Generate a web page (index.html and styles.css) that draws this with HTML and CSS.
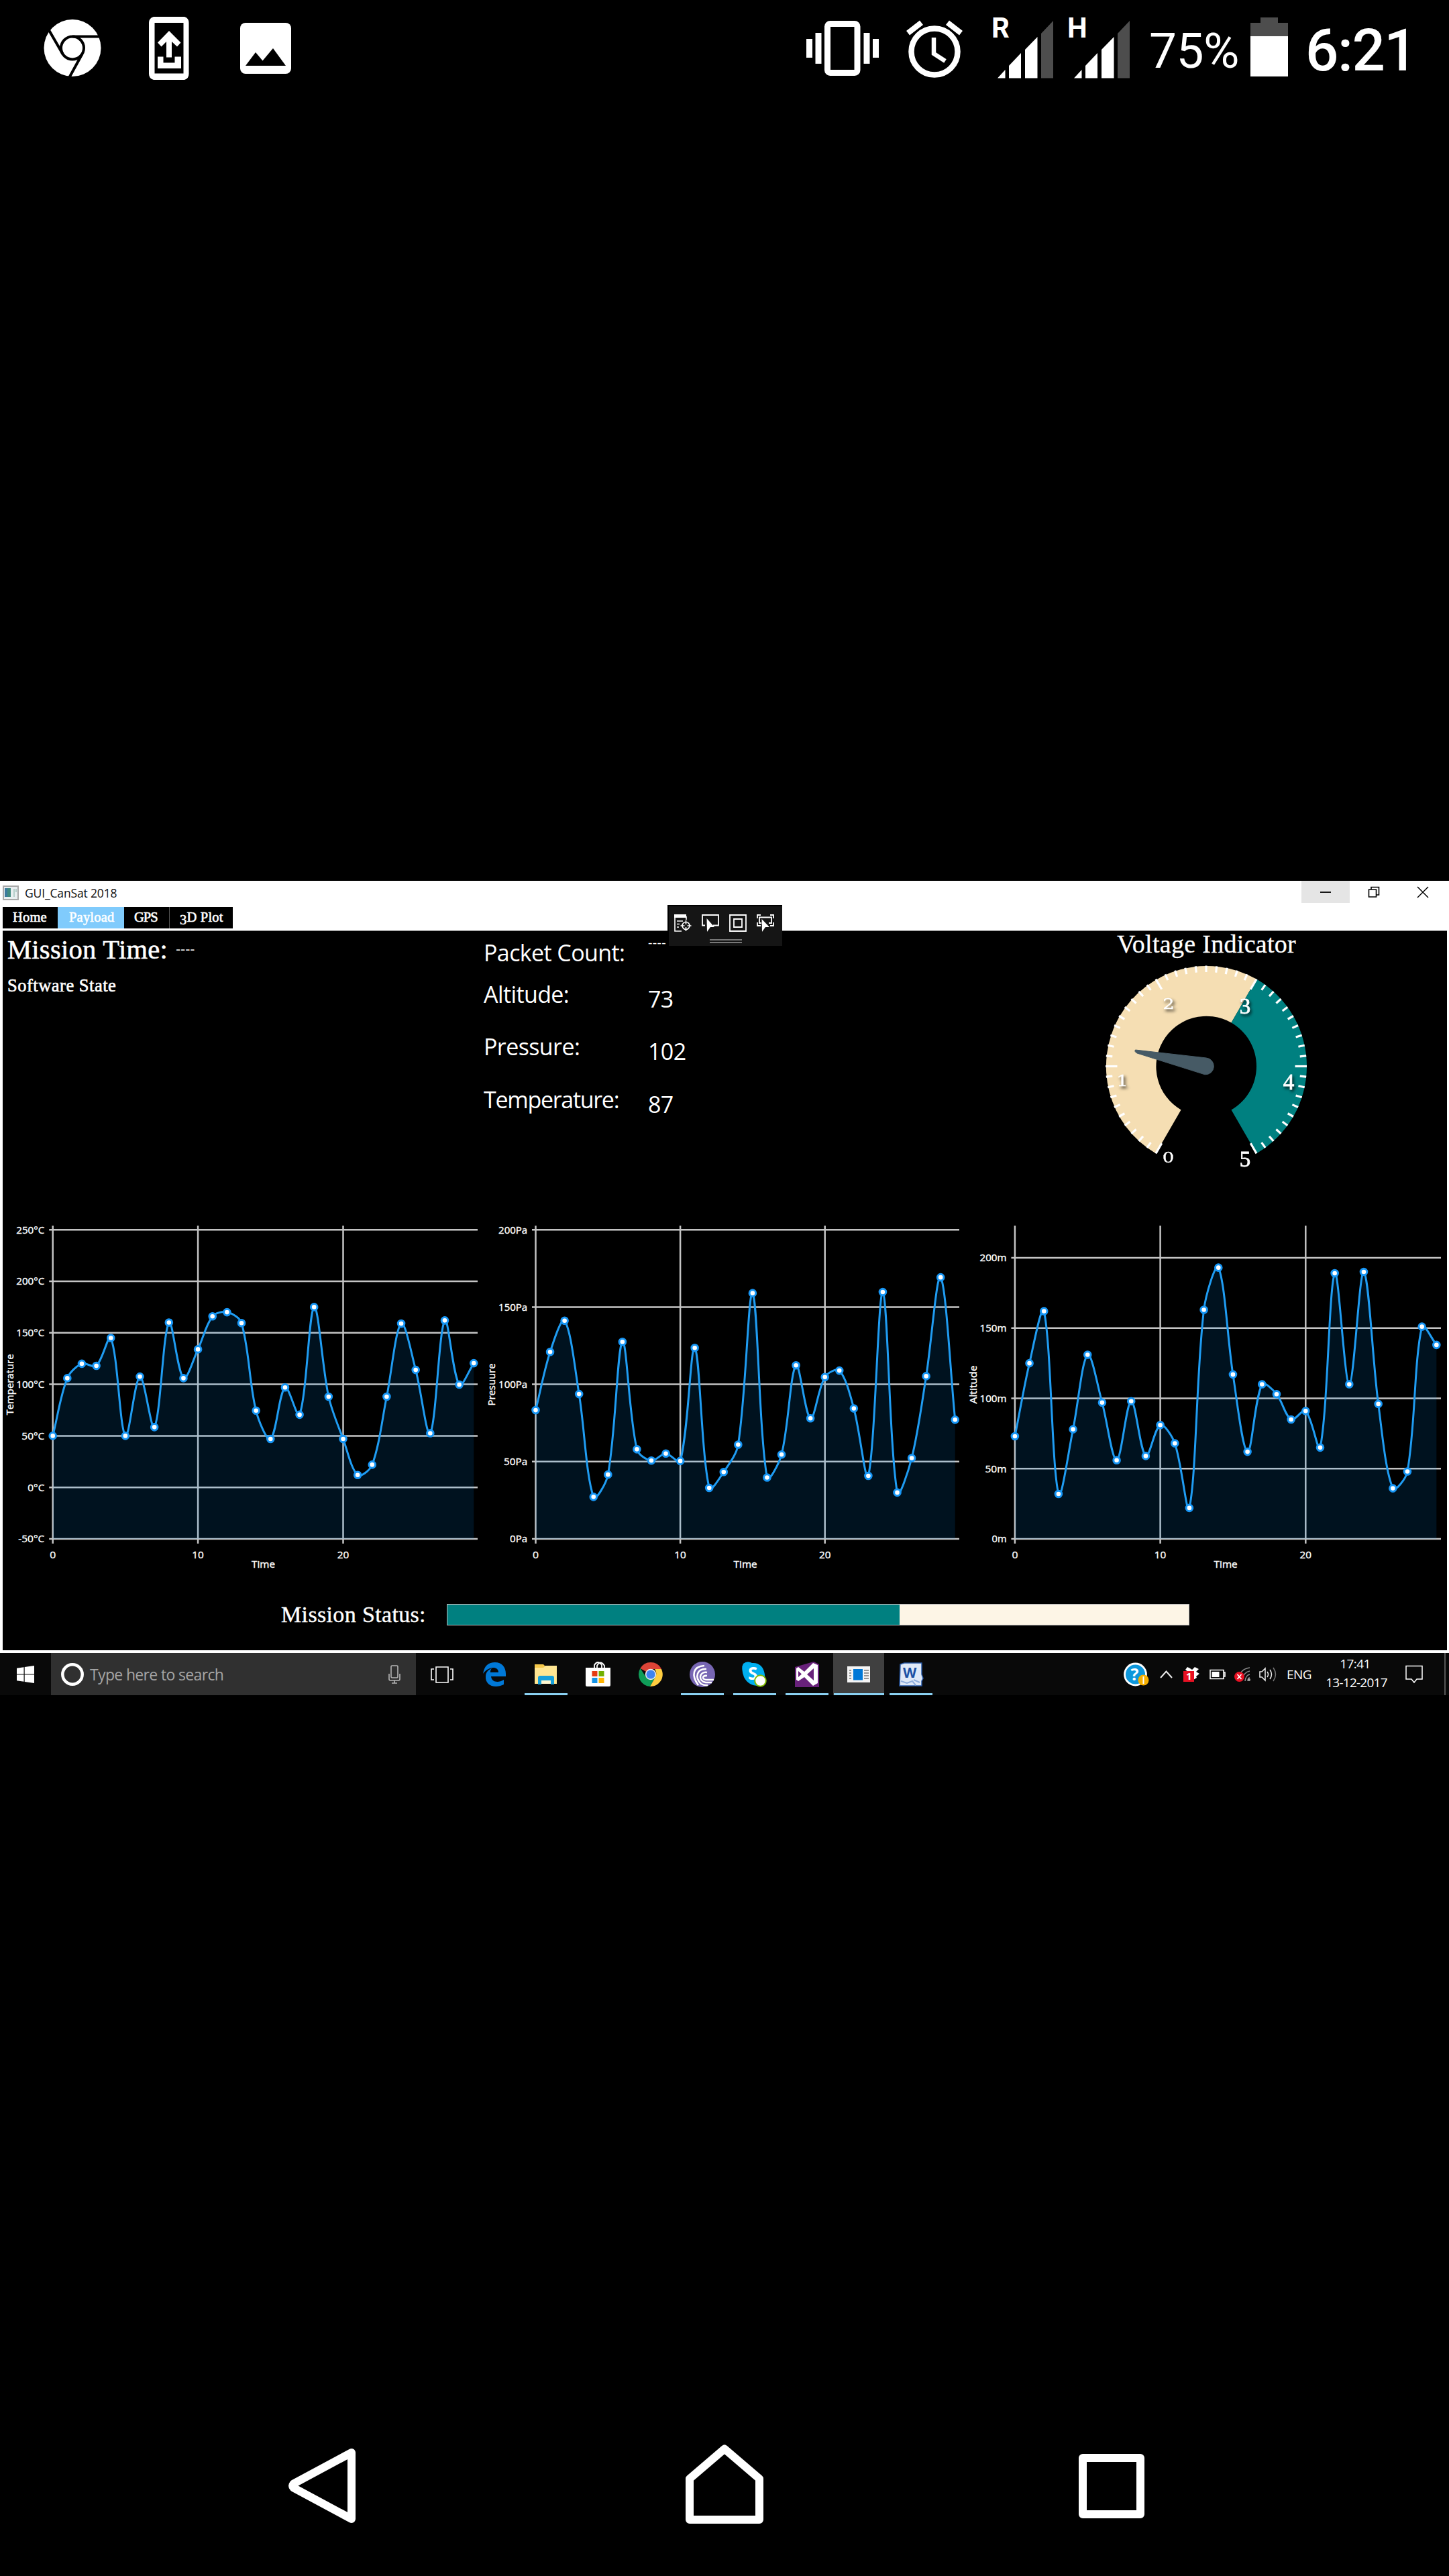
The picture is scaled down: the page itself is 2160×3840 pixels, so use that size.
FILE: index.html
```html
<!DOCTYPE html>
<html lang="en">
<head>
<meta charset="utf-8">
<title>GUI_CanSat 2018</title>
<link rel="stylesheet" href="styles.css">
</head>
<body>
<header class="phone-status">
  <div class="notif">
    <svg width="86" height="100" viewBox="65 20 86 100">
      <circle cx="108" cy="71.5" r="42.5" fill="#fff"/>
      <circle cx="108" cy="71.5" r="17" fill="none" stroke="#000" stroke-width="4"/>
      <path d="M108 54.500H148M93.500 80.500L73 45M122.500 80.500L103 116" fill="none" stroke="#000" stroke-width="4"/>
    </svg>
    <svg width="60" height="100" viewBox="222 20 60 100">
      <path fill="#fff" fill-rule="evenodd" d="M229 25H275Q281.500 27 281.500 34V110Q281.500 117 275 119H229Q222 117 222 110V34Q222 27 229 25ZM230.500 34V109.500H273.500V34Z"/>
      <path fill="#fff" d="M252 46L269.500 63.500L264 69.500L256 62V85.500H248V62L240.500 69.500L235 63.500ZM235 84.500H243.500V93.500H260.500V84.500H270V102H235Z"/>
    </svg>
    <svg width="76" height="100" viewBox="358 20 76 100">
      <rect x="358" y="34" width="76" height="76" rx="8" fill="#fff"/>
      <path d="M366 98L381 78L391.500 90.500L407 72L426 98Z"/>
    </svg>
  </div>
  <div class="sys">
    <svg width="110" height="100" viewBox="1201 20 110 100">
      <rect x="1233.500" y="35.500" width="44.500" height="73" rx="4" fill="none" stroke="#fff" stroke-width="9"/>
      <path fill="#fff" d="M1202 58h9v28h-9zM1215.500 49h9v46h-9zM1287.500 49h9v46h-9zM1301 58h9v28h-9z"/>
    </svg>
    <svg class="alarm" width="86" height="100" viewBox="1350 20 86 100">
      <circle cx="1393" cy="77" r="34.500" fill="none" stroke="#fff" stroke-width="8.500"/>
      <path d="M1392 56V80L1409 91" fill="none" stroke="#fff" stroke-width="6.500"/>
      <path fill="#fff" d="M1371 30.500L1376 37L1356 52.500L1351 46ZM1415 30.500L1410 37L1430 52.500L1435 46Z"/>
    </svg>
    <svg class="signal" width="94" height="100" viewBox="1478 20 94 100">
      <text x="1478" y="56" class="net">R</text>
      <path fill="#fff" d="M1487 116.500L1498.500 104V116.500ZM1504 116.500V98L1522 79V116.500ZM1528 116.500V74L1546.500 55V116.500Z"/>
      <path fill="#4d4d4d" d="M1552 116.500V50L1570 31V116.500Z"/>
    </svg>
    <svg class="signal second" width="94" height="100" viewBox="1592 20 94 100">
      <text x="1591" y="56" class="net">H</text>
      <path fill="#fff" d="M1601 116.500L1612.500 104V116.500ZM1618 116.500V98L1636 79V116.500ZM1642 116.500V74L1660.500 55V116.500Z"/>
      <path fill="#4d4d4d" d="M1666 116.500V50L1684 31V116.500Z"/>
    </svg>
    <span class="pct">75%</span>
    <svg class="batt" width="56" height="100" viewBox="1864 20 56 100">
      <path fill="#4d4d4d" d="M1879 26h26v8h15v20h-56V34h15z"/>
      <path fill="#fff" d="M1864 54h56v60h-56z"/>
    </svg>
    <span class="clock">6:21</span>
  </div>
</header>

<main class="desktop">
  <section class="window">
    <div class="titlebar">
      <svg class="app-icon" width="24" height="22" viewBox="0 0 24 22">
        <rect x="1" y="1" width="22" height="20" fill="#e9eef0" stroke="#a9a9a9" stroke-width="2"/>
        <rect x="3" y="4" width="9" height="13" fill="#3f8a80"/><rect x="3" y="4" width="4" height="13" fill="#3c7a9e"/>
        <path d="M17 5v12M20 5v5" stroke="#b5cfcb" stroke-width="2"/>
      </svg>
      <span class="app-title">GUI_CanSat 2018</span>
      <div class="win-buttons">
        <span class="min"><svg width="18" height="18" viewBox="0 0 18 18"><path d="M1 9h16" stroke="#000" stroke-width="1.800"/></svg></span>
        <span><svg width="18" height="18" viewBox="0 0 18 18"><path d="M1.500 5h11v11h-11zM5 5V1.500h11.500V13h-4" fill="none" stroke="#000" stroke-width="1.600"/></svg></span>
        <span><svg width="18" height="18" viewBox="0 0 18 18"><path d="M1 1l16 16M17 1L1 17" stroke="#000" stroke-width="1.500"/></svg></span>
      </div>
    </div>
    <nav class="tabs">
      <span class="t-home">Home</span><span class="t-payload">Payload</span><span class="t-gps">GPS</span><span class="t-plot"><i>3</i>D Plot</span>
    </nav>
    <div class="content">
      <div class="top">
        <div class="mission">
          <div class="mission-time"><span>Mission Time:</span><span class="dashes">----</span></div>
          <div class="software">Software State</div>
        </div>
        <div class="telemetry">
          <span>Packet Count:</span><b class="dashes">----</b>
          <span>Altitude:</span><b>73</b>
          <span>Pressure:</span><b>102</b>
          <span class="temp">Temperature:</span><b>87</b>
        </div>
        <div class="voltage">
          <h2>Voltage Indicator</h2>
          <svg id="gauge" width="400" height="340" viewBox="-200 -159.500 400 340"></svg>
        </div>
      </div>
      <div class="charts">
        <svg id="temperature" width="716" height="554" viewBox="4 1800 716 554"></svg>
        <svg id="pressure" width="720" height="554" viewBox="720 1800 720 554"></svg>
        <svg id="altitude" width="717" height="554" viewBox="1440 1800 717 554"></svg>
      </div>
      <div class="status">
        <span>Mission Status:</span>
        <div class="progress"><div class="done"></div></div>
      </div>
    </div>
    <div class="debug-bar">
      <div class="debug-icons">
        <svg width="26" height="26" viewBox="0 0 26 26" fill="none" stroke="#fff" stroke-width="1.600">
          <path d="M1 1V25H11M1 3H18" /><path d="M0 2.500H18" stroke-width="5"/><path d="M18 3v5M4 10h9M4 14.500h4M4 19h3"/><circle cx="17.500" cy="17" r="5.500"/><path d="M17.500 9v6M17.500 19v6M9.500 17h6M19.500 17h6"/>
        </svg>
        <svg width="26" height="26" viewBox="0 0 26 26" fill="none" stroke="#fff" stroke-width="1.800">
          <path d="M5 16.500H1V1H25V16.500H17"/><path d="M7.500 6L19 19H13L8 26Z" fill="#fff" stroke="none"/>
        </svg>
        <svg width="26" height="26" viewBox="0 0 26 26" fill="none" stroke="#fff" stroke-width="1.800">
          <path d="M1 1H25V25H1ZM7 7H19V19H7Z"/>
        </svg>
        <svg width="26" height="26" viewBox="0 0 26 26" fill="none" stroke="#fff" stroke-width="1.800">
          <path d="M1 6V1H6M20 1H25V6M25 12V17H20M1 12V17H6M7 13H4V4.500H22V13H18"/><path d="M7.500 7L19 19H13L8 26Z" fill="#fff" stroke="none"/>
        </svg>
      </div>
      <div class="grip"></div>
    </div>
  </section>

  <footer class="taskbar">
    <div class="start"><svg width="26" height="26" viewBox="0 0 26 26" fill="#fff"><path d="M0 3.700L10.500 2.200V12.400H0ZM11.700 2L26 0V12.400H11.700ZM0 13.600H10.500V23.800L0 22.300ZM11.700 13.600H26V26L11.700 24Z"/></svg></div>
    <div class="search">
      <svg width="36" height="36" viewBox="0 0 36 36"><circle cx="18" cy="18" r="14.700" fill="none" stroke="#fff" stroke-width="4.500"/></svg>
      <span>Type here to search</span>
      <svg width="18" height="28" viewBox="0 0 18 28" fill="none" stroke="#b5b5b5" stroke-width="1.600"><rect x="4" y="1" width="10" height="18" rx="1.500"/><path d="M1 13v8q0 2 2 2h12q2 0 2-2v-8M9 23v4M5 27h8"/></svg>
    </div>
    <div class="tasks">
      <span><svg width="34" height="26" viewBox="0 0 34 26" fill="none" stroke="#fff" stroke-width="1.600"><path d="M8 2H26V25H8ZM5 5H1V21H5M29 5H33V21H29"/></svg></span>
      <span><svg width="34" height="36" viewBox="0 0 34 36"><path fill="#0078d7" d="M0 17C2 5 8 0 18 0C28 0 34 7 34 17V21H12C13 30 23 31 31 26V33C17 40 3 34 4 21C4 15 8 11 13 9C11 11 11 13 11 15H23C23 6 9 5 0 17Z"/></svg></span>
      <span class="open"><svg width="34" height="30" viewBox="0 0 34 30"><path fill="#f5c84a" d="M0 0h13l3 3h17v26H0z"/><path fill="#ffe692" d="M0 5h13l3-3h17v27H0z"/><path fill="#15a0db" d="M5 30V20q0-3 3-3h18q3 0 3 3v10h-5v-6H10v6z"/><path fill="#fff7cf" d="M10 24h14v5H10z"/></svg></span>
      <span><svg width="37" height="38" viewBox="0 0 37 38"><path d="M13 11V5Q18 -3 24 5V11M17 11V6Q22 -3 28 6V11" fill="none" stroke="#fff" stroke-width="1.800"/><path fill="#fff" d="M0 9H37V35Q37 37 35 37H2Q0 37 0 35Z"/><path fill="#e63b13" d="M9.500 14h8v8h-8z"/><path fill="#71b000" d="M19.500 14h8v8h-8z"/><path fill="#1593e6" d="M9.500 24h8v8h-8z"/><path fill="#ffb400" d="M19.500 24h8v8h-8z"/></svg></span>
      <span><svg width="36" height="36" viewBox="0 0 36 36"><path fill="#dc4437" d="M18 18L2.400 9A18 18 0 0 1 33.600 9L33.600 10H18Z"/><path fill="#0f9d58" d="M2.400 9A18 18 0 0 0 17 36L25 22L18 18L11 22Z"/><path fill="#ffcd40" d="M33.900 10A18 18 0 0 1 17 36L25 22Q28 16 24 10Z"/><circle cx="18" cy="18" r="8.200" fill="#f1f1f1"/><circle cx="18" cy="18" r="6.600" fill="#3f83f1"/></svg></span>
      <span class="open"><svg width="38" height="38" viewBox="0 0 38 38"><circle cx="19" cy="19" r="19" fill="#7766b3"/><path d="M22 6C5 7 2 20 13 35M25 11C11 10 7 23 17 33Q22 36 27 35M26 16C14 14 12 29 24 31H33M26 21C18 20 18 27 26 27H36" fill="none" stroke="#fff" stroke-width="2.600"/></svg></span>
      <span class="open"><svg width="37" height="38" viewBox="0 0 37 38"><path fill="#00aff0" d="M2 3Q8 -2 15 2Q31 1 34 19Q36 31 27 36Q10 37 3 23Q-2 9 2 3Z"/><text x="9" y="27" class="skype">S</text><circle cx="27.500" cy="28.500" r="8.300" fill="#fff" stroke="#7fba00" stroke-width="2"/></svg></span>
      <span class="open"><svg width="36" height="38" viewBox="0 0 36 38"><path fill="#68217a" d="M0 8L28 0L36 4V38H0Z"/><path fill="#fff" fill-rule="evenodd" d="M2 10L5 8L14 15L27 2L34 5V32L27 36L14 23L5 29L2 27ZM5 14V23L10 18.500ZM18 19L28 28V10Z"/></svg></span>
      <span class="open active"><svg width="34" height="24" viewBox="0 0 34 24"><path fill="#f4f4f4" d="M0 0h34v24H0z"/><path fill="#0078d7" d="M9 4h14v16.500H9z"/><path d="M3 6h3M3 10h3M3 14h3M3 18h3M25 6h7M25 10h7M25 14h7M25 18h7" stroke="#777" stroke-width="1.500"/></svg></span>
      <span class="open"><svg width="36" height="36" viewBox="0 0 36 36"><path fill="#dfe9f8" stroke="#2859a6" stroke-width="1.500" d="M2 3L8 1H34V18L36 24L34 28V35H1Z"/><path d="M3 28L12 31L20 28L25 34M22 26L31 30" stroke="#8faede" stroke-width="2" fill="none"/><text x="6" y="23" class="word">W</text></svg></span>
    </div>
    <div class="tray">
      <svg width="38" height="36" viewBox="0 0 38 36"><circle cx="17.500" cy="18" r="16" fill="#0d97dc" stroke="#fff" stroke-width="2.800"/><text x="10.500" y="27" class="help">?</text><circle cx="29.500" cy="26.500" r="8" fill="#f8b000"/><path d="M29.500 21v11" stroke="#fff" stroke-width="2"/></svg>
      <svg class="chev" width="19" height="12" viewBox="0 0 19 12"><path d="M1 11L9.500 1.500L18 11" fill="none" stroke="#eee" stroke-width="2"/></svg>
      <svg class="dbx" width="24" height="24" viewBox="0 0 24 24"><path fill="#fff" d="M6 1l4 2 3 2 4-4 6 3-4 4 5 3-5 4 1 2-5 3-4-9-8-6z"/><path fill="#e81123" d="M0 7h16v16H0z"/><text x="4" y="20" class="one">1</text></svg>
      <svg class="bat" width="24" height="16" viewBox="0 0 24 16"><path d="M1 1.500h20v13H1zM21 5h2v6h-2" fill="none" stroke="#fff" stroke-width="1.600"/><path fill="#fff" d="M3.500 4h11v8h-11z"/></svg>
      <svg class="wifi" width="25" height="24" viewBox="0 0 25 24"><path d="M23 2Q8 4 6 20M23 7Q13 9 11 22M23 12Q17 13 16 22M23 17Q20 17 20 22" fill="none" stroke="#8b8b8b" stroke-width="1.500"/><circle cx="22" cy="20" r="2" fill="#aaa"/><circle cx="7.500" cy="15.500" r="7.500" fill="#e81123"/><path d="M4.500 12l6 7M10.500 12l-6 7" stroke="#fff" stroke-width="1.700"/></svg>
      <svg class="spk" width="27" height="24" viewBox="0 0 27 24" fill="none" stroke="#eee" stroke-width="1.500"><path d="M1 8h3l5-5v18l-5-5H1zM12 8q3 4 0 8M16 5q5 7 0 14"/><path d="M21 2q7 10 0 20" stroke="#777"/></svg>
      <span class="lang">ENG</span>
      <div class="datetime"><span class="tm">17:41</span><span class="dt">13-12-2017</span></div>
      <svg class="act" width="26" height="28" viewBox="0 0 26 28"><path d="M1 1.500H25V21H17L13 26L9 21H1Z" fill="none" stroke="#fff" stroke-width="1.500"/></svg>
      <div class="peek"></div>
    </div>
  </footer>
</main>

<nav class="phone-nav">
  <svg width="100" height="130" viewBox="430 3638 100 130"><path d="M524 3656V3755L437.500 3708.500Q435 3705.500 437.500 3702.500Z" fill="none" stroke="#fff" stroke-width="12" stroke-linejoin="round"/></svg>
  <svg width="116" height="130" viewBox="1022 3638 116 130"><path d="M1080 3650.500L1132 3695V3756H1028V3695Z" fill="none" stroke="#fff" stroke-width="12" stroke-linejoin="round"/></svg>
  <svg width="98" height="130" viewBox="1608 3638 98 130"><path d="M1614 3664H1700V3748H1614Z" fill="none" stroke="#fff" stroke-width="12" stroke-linejoin="round"/></svg>
</nav>
<script src="charts.js"></script>
</body>
</html>
```
FILE: styles.css
```css
* { box-sizing: border-box; }
body {
  margin: 0;
  width: 2160px;
  height: 3840px;
  background: #000;
  color: #fff;
  font-family: "Open Sans", "Noto Sans", sans-serif;
  display: flex;
  flex-direction: column;
  overflow: hidden;
}
svg { display: block; flex: none; overflow: visible; }

/* phone status bar */
.phone-status {
  height: 1313px;
  padding: 20px 0 0 65px;
  display: flex;
  align-items: flex-start;
  font-family: Roboto, sans-serif;
}
.notif { display: flex; gap: 71px; }
.notif svg:last-child { margin-left: 5px; }
.sys { display: flex; align-items: flex-start; margin-left: 767px; }
.alarm { margin-left: 39px; }
.signal { margin-left: 42px; }
.signal.second { margin-left: 20px; }
.net { font: 700 42px Roboto, sans-serif; fill: #fff; }
.pct { width: 150px; margin-left: 27px; font-size: 73px; line-height: 112px; letter-spacing: -0.5px; }
.batt { margin-left: 1px; }
.clock { margin-left: 26px; font-size: 87px; font-weight: 500; line-height: 110px; letter-spacing: -1.5px; }

/* application window */
.desktop { height: 1214px; flex: none; }
.window { position: relative; height: 1151px; background: #fff; color: #fff; }
.titlebar { height: 39px; display: flex; align-items: flex-start; padding: 7px 3px 0 4px; color: #111; }
.app-title { margin-left: 9px; font-size: 17.5px; line-height: 22px; letter-spacing: -0.15px; }
.win-buttons { margin: -7px 0 0 auto; display: flex; }
.win-buttons span { width: 72.500px; height: 33px; display: flex; align-items: center; justify-content: center; }
.win-buttons .min { background: #e5e5e5; }
.tabs {
  display: flex;
  height: 32px;
  margin-left: 4px;
  font: 20.500px/31px "Liberation Serif", serif;
  letter-spacing: 0.2px;
  -webkit-text-stroke: 0.6px #fff;
}
.tabs span { background: #000; padding-left: 15px; }
.tabs i { font-style: normal; display: inline-block; transform: translateY(4px); }
.tabs .t-home { width: 82px; }
.tabs .t-payload { width: 99px; background: #80cbfc; padding-left: 17px; }
.tabs .t-gps { width: 68px; border-right: 1px solid #555; letter-spacing: -1px; }
.tabs .t-plot { width: 94px; }
.content {
  margin: 3px 3px 4px 4px;
  height: 1073px;
  background: #000;
  border-top: 1px solid #777;
  display: flex;
  flex-direction: column;
}
.top { display: grid; grid-template-columns: 717px 719px 717px; height: 412px; }
.mission { padding: 6px 0 0 7px; font-family: "Liberation Serif", serif; -webkit-text-stroke: 0.6px #fff; }
.mission-time { display: flex; font-size: 40.500px; line-height: 44px; letter-spacing: 0.3px; }
.mission-time .dashes { margin-left: 12px; font-size: 20px; line-height: 40px; letter-spacing: 0.5px; -webkit-text-stroke: 0; }
.software { margin-top: 16px; font-size: 26.500px; line-height: 30px; letter-spacing: 0.5px; }
.telemetry {
  display: grid;
  grid-template-columns: 245px auto;
  grid-template-rows: 61.500px 78px 79px 60px;
  padding-top: 12px;
  font-size: 34px;
  line-height: 40px;
  letter-spacing: -0.6px;
}
.telemetry .temp { letter-spacing: -1.3px; }
.telemetry b { font-weight: 400; padding-top: 7px; }
.telemetry .dashes { padding: 0; margin-top: -5px; font-size: 20px; line-height: 20px; letter-spacing: 0.3px; }
.voltage { display: flex; flex-direction: column; align-items: center; font-family: "Liberation Serif", serif; }
.voltage h2 { margin: 2px 0 0; font-size: 38px; font-weight: 400; line-height: 34px; letter-spacing: 0.3px; -webkit-text-stroke: 0.3px #fff; }
#gauge { margin: 6px 2px 0 0; }
.num { fill: #fff; text-anchor: middle; font: 33px "Liberation Serif", serif; filter: drop-shadow(2px 3px 2px rgba(0, 0, 0, .75)); stroke: #fff; stroke-width: .8px; }
.num.small { font: 23px "DejaVu Serif", serif; stroke-width: .3px; }
.charts { display: flex; height: 554px; }
.charts text { fill: #fff; stroke: #fff; stroke-width: .35px; font: 14px "Open Sans", "Noto Sans", sans-serif; }
.grid { stroke: #c4c4c4; stroke-width: 2.500px; }
.line { fill: none; stroke: #1f9cf2; stroke-width: 3px; }
.area { fill: rgba(0, 150, 255, .12); }
.dot { fill: #fff; stroke: #1796f5; stroke-width: 3px; }
.status { height: 106px; display: flex; align-items: center; padding-left: 415px; font: 34px "Liberation Serif", serif; letter-spacing: 0.35px; }
.status span { width: 247px; -webkit-text-stroke: 0.4px #fff; }
.progress { width: 1107px; height: 32px; background: #fdf5e6; border: 1px solid #bcbcbc; }
.done { width: 674px; height: 30px; background: #008080; }

/* in-app debug toolbar */
.debug-bar { position: absolute; left: 995px; top: 36px; width: 171px; height: 61px; background: #151515; border: solid #000; border-width: 2px 0 0 2px; }
.debug-icons { display: flex; gap: 15px; padding: 12px 0 0 8px; }
.grip { width: 48px; height: 6px; margin: 11px auto 0; border: solid #777; border-width: 2px 0; }

/* desktop taskbar */
.taskbar { height: 63px; background: #090909; display: flex; align-items: stretch; }
.start { width: 76px; padding-left: 25px; display: flex; align-items: center; }
.search { width: 544px; background: #303030; display: flex; align-items: center; padding: 0 23px 0 14px; color: #a5a5a5; }
.search span { flex: 1; margin-left: 8px; font-size: 23px; letter-spacing: -0.65px; }
.tasks { display: flex; }
.tasks span { position: relative; width: 77.700px; display: flex; align-items: center; justify-content: center; }
.tasks .open::after { content: ""; position: absolute; left: 7px; right: 7px; bottom: 0; height: 3px; background: #8bd2f4; }
.tasks .active { background: linear-gradient(#404040, #404040) center / 76px 63px no-repeat; }
.tasks .active::after { left: 1px; right: 1px; }
.skype { font: 700 26px "Open Sans", sans-serif; fill: #fff; }
.word { font: 700 21px "Open Sans", sans-serif; fill: #1a50a5; }
.help { font: 700 25px "Open Sans", sans-serif; fill: #fff; }
.one { font: 700 15px "Open Sans", sans-serif; fill: #fff; }
.tray { margin-left: auto; display: flex; align-items: center; letter-spacing: -0.6px; }
.chev { margin-left: 16px; }
.dbx { margin-left: 16px; }
.bat { margin-left: 15px; }
.wifi { margin-left: 13px; }
.spk { margin-left: 12px; }
.lang { width: 43px; margin-left: 14px; font-size: 19px; line-height: 28px; }
.datetime { width: 92px; margin: -3px 0 0 15px; display: flex; flex-direction: column; text-align: center; font-size: 19px; line-height: 28px; }
.tm { padding-right: 4px; }
.dt { letter-spacing: -0.75px; white-space: nowrap; }
.act { margin-left: 27px; }
.peek { width: 2px; height: 63px; margin: 0 5px 0 32px; background: #555; }

/* phone navigation */
.phone-nav { margin-top: 1111px; padding-left: 430px; display: flex; }
.phone-nav svg:nth-child(2) { margin-left: 492px; }
.phone-nav svg:nth-child(3) { margin-left: 470px; }
```
FILE: charts.js
```js
const NS = "http://www.w3.org/2000/svg";

function add(parent, tag, attrs, text) {
  const el = document.createElementNS(NS, tag);
  for (const k in attrs) el.setAttribute(k, attrs[k]);
  if (text !== undefined) el.textContent = text;
  parent.appendChild(el);
  return el;
}

// Smoothed bezier through the points; 0.65 is the curve tension.
function smoothPath(pts) {
  const s = 0.65;
  let d = `M${pts[0][0]} ${pts[0][1]}`;
  for (let i = 0; i < pts.length - 1; i++) {
    const p1 = pts[i], p2 = pts[i + 1];
    const p0 = pts[i - 1] || p1, p3 = pts[i + 2] || p2;
    const mid = (a, b) => [(a[0] + b[0]) / 2, (a[1] + b[1]) / 2];
    const len = (a, b) => Math.hypot(a[0] - b[0], a[1] - b[1]);
    const c1 = mid(p0, p1), c2 = mid(p1, p2), c3 = mid(p2, p3);
    const l1 = len(p0, p1), l2 = len(p1, p2), l3 = len(p2, p3);
    const k1 = l1 / (l1 + l2), k2 = l2 / (l2 + l3);
    const a = [0, 1].map(j => (c2[j] - (c1[j] + (c2[j] - c1[j]) * k1)) * s + p1[j]);
    const b = [0, 1].map(j => (c2[j] - (c2[j] + (c3[j] - c2[j]) * k2)) * s + p2[j]);
    d += `C${a[0]} ${a[1]} ${b[0]} ${b[1]} ${p2[0]} ${p2[1]}`;
  }
  return d;
}

function chart(c) {
  const svg = document.getElementById(c.id);
  const X = v => c.x0 + v * c.dx;
  const Y = v => 2294 - (v - c.min) * c.dy;
  c.ticks.forEach(t => {
    add(svg, "path", { class: "grid", d: `M${c.x0 - 5.5} ${Y(t)}H${c.right}` });
    const label = t + c.unit;
    add(svg, "text", { x: c.x0 - 12.4, y: Y(t) + 5.3, "text-anchor": "end", textLength: t < 0 ? 39 : c.widths[String(t).length - 1], lengthAdjust: "spacingAndGlyphs" }, label);
  });
  [0, 10, 20].forEach(t => {
    add(svg, "path", { class: "grid", d: `M${X(t)} 1827V2301` });
    add(svg, "text", { x: X(t), y: 2323, "text-anchor": "middle", textLength: t ? 17.5 : 9, lengthAdjust: "spacingAndGlyphs" }, t);
  });
  const pts = c.data.map((v, i) => [X(i), Y(v)]);
  const d = smoothPath(pts);
  add(svg, "path", { class: "area", d: `${d}V2294H${c.x0}Z` });
  add(svg, "path", { class: "line", d });
  pts.forEach(p => add(svg, "circle", { class: "dot", cx: p[0], cy: p[1], r: 4.8 }));
  add(svg, "text", { x: X(14.5), y: 2337, "text-anchor": "middle", textLength: 35, lengthAdjust: "spacingAndGlyphs" }, "Time");
  add(svg, "text", { transform: `translate(${c.nameX} ${c.nameY}) rotate(-90)`, "text-anchor": "middle", textLength: c.nameLen, lengthAdjust: "spacingAndGlyphs" }, c.name);
}

chart({
  id: "temperature", name: "Temperature", nameX: 19.5, nameY: 2064, nameLen: 91, unit: "°C",
  x0: 78.7, dx: 21.64, right: 712, min: -50, dy: 1.536,
  ticks: [-50, 0, 50, 100, 150, 200, 250], widths: [25, 34, 42],
  data: [50, 106, 120, 118, 145, 50, 107.5, 58.5, 160, 106, 134, 166, 170, 159.5, 74.5, 47, 97, 70.5, 175, 88, 47, 12, 22, 88, 159, 114, 52.5, 162, 99.7, 120.5]
});
chart({
  id: "pressure", name: "Presuure", nameX: 738, nameY: 2064, nameLen: 63, unit: "Pa",
  x0: 798.5, dx: 21.56, right: 1430, min: 0, dy: 2.304,
  ticks: [0, 50, 100, 150, 200], widths: [26, 35, 43],
  data: [83.3, 121, 141.2, 93.7, 27.2, 41.6, 127.5, 58, 50.7, 55.2, 50.4, 123.6, 33, 43.3, 61, 159, 39.7, 54.6, 112.3, 78, 104.7, 108.9, 84.4, 40.8, 159.7, 30, 52.3, 105.3, 169.2, 77.1]
});
chart({
  id: "altitude", name: "Altitude", nameX: 1455.5, nameY: 2064, nameLen: 57, unit: "m",
  x0: 1512.9, dx: 21.67, right: 2148, min: 0, dy: 2.095,
  ticks: [0, 50, 100, 150, 200], widths: [22, 32, 40],
  data: [73, 125, 162, 32, 78, 131, 97, 56, 98, 59, 81, 68, 22, 163, 193, 117, 62, 110, 103, 85, 91, 65, 189, 110, 190, 96, 36, 48, 151, 138]
});

// Voltage gauge: 0-5 V over 300 degrees, 60 degrees per volt.
(function gauge() {
  const svg = document.getElementById("gauge");
  const at = (v, r) => {
    const a = (v * 60 + 120) * Math.PI / 180;
    return `${(r * Math.cos(a)).toFixed(2)} ${(r * Math.sin(a)).toFixed(2)}`;
  };
  const wedge = (v0, v1, big) => `M${at(v0, 150)}A150 150 0 ${big} 1 ${at(v1, 150)}L${at(v1, 75)}A75 75 0 ${big} 0 ${at(v0, 75)}Z`;
  add(svg, "path", { d: wedge(0, 3, 0), fill: "#f5deb3" });
  add(svg, "path", { d: wedge(3, 5, 0), fill: "#008080" });
  for (let i = 0; i <= 50; i++) {
    const major = i % 10 === 0;
    add(svg, "path", { d: `M${at(i / 10, 150)}L${at(i / 10, major ? 132.5 : 140.5)}`, stroke: "#fff", "stroke-width": 3.2 });
  }
  add(svg, "path", {
    d: "M0 -12.500A12.200 12.300 0 1 1 -2 12.300L-103 -19.500Q-107.500 -22 -105.500 -24.500Z",
    fill: "#465a65", stroke: "#465a65", "stroke-linejoin": "round"
  });
  [["0", -56.5, 143, 1], ["1", -125, 29.5, 1], ["2", -56, -85.500, 1], ["3", 58, -79, 0], ["4", 123, 34, 0], ["5", 58, 149.5, 0]]
    .forEach(([t, x, y, small]) => add(svg, "text", small
      ? { class: "num small", transform: `translate(${x} ${y}) scale(1.2 1)` }
      : { class: "num", x, y }, t));
})();
```
